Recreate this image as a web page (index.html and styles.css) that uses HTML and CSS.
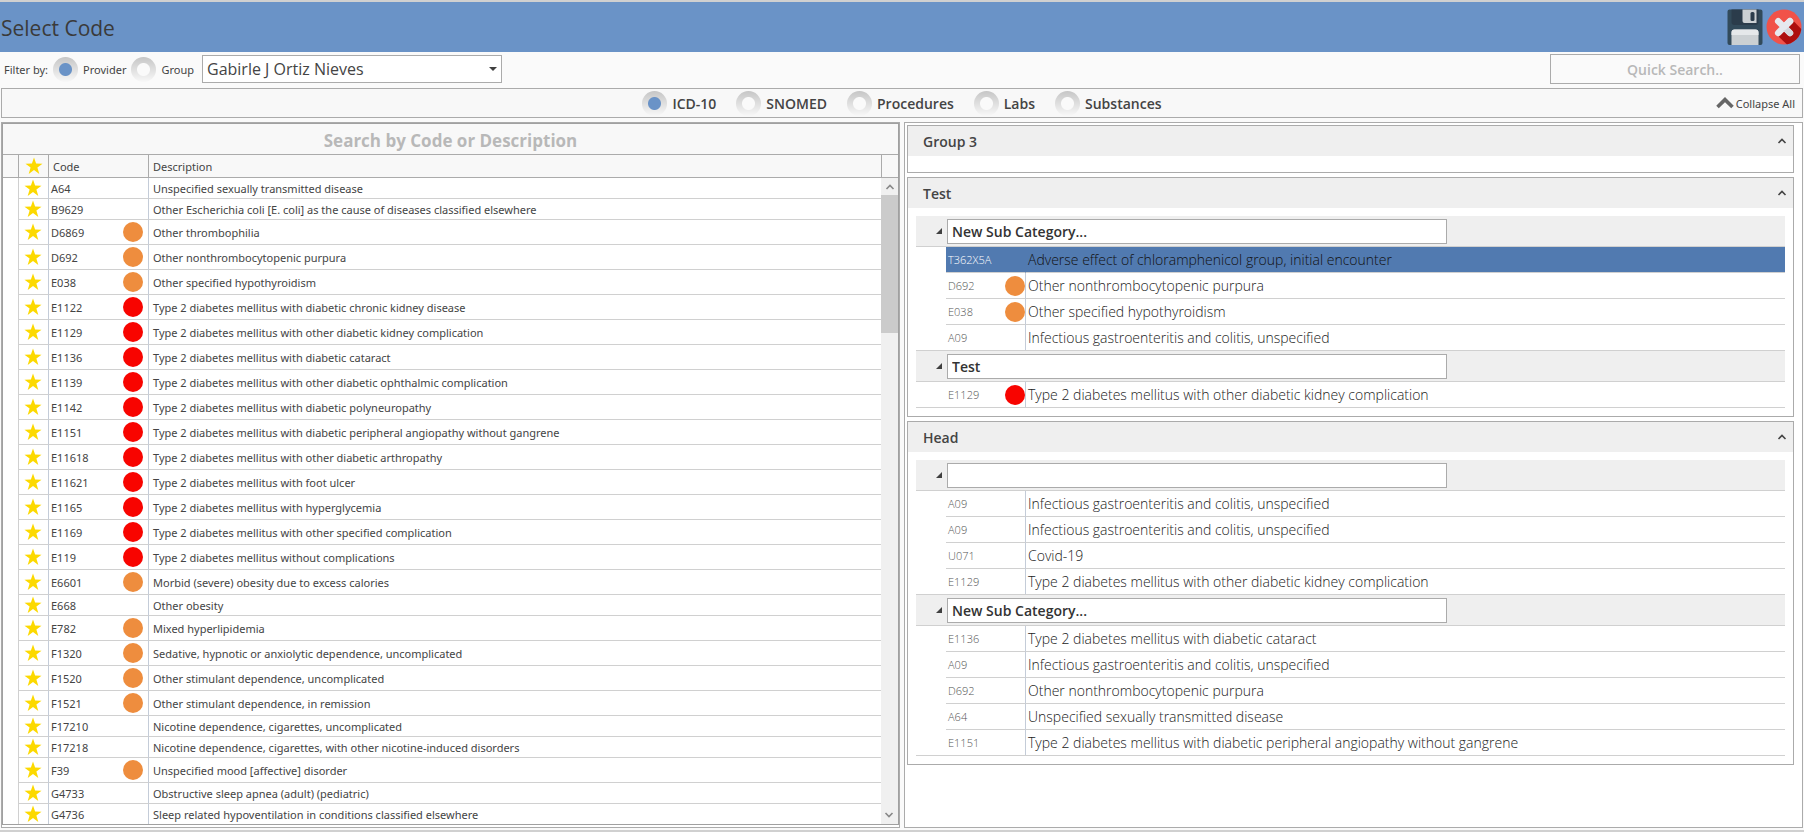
FILE: index.html
```html
<!DOCTYPE html>
<html lang="en">
<head>
<meta charset="utf-8">
<title>Select Code</title>
<link rel="stylesheet" href="styles.css">
</head>
<body>
<svg class="sprite" aria-hidden="true">
  <symbol id="star" viewBox="0 0 18 18"><path d="M9 0.5 11.1 6.6 17.5 6.7 12.4 10.6 14.3 16.9 9 13.1 3.7 16.9 5.6 10.6 0.5 6.7 6.9 6.6Z" fill="#fcd900"/></symbol>
  <symbol id="chev" viewBox="0 0 10 6"><path d="M1.5 5 5 1.5 8.500 5" fill="none" stroke="currentColor" stroke-width="1.6"/></symbol>
  <symbol id="tri" viewBox="0 0 6 6"><path d="M6 0V6H0Z" fill="#404040"/></symbol>
</svg>
<header class="titlebar">
  <h1>Select Code</h1>
  <div class="actions">
    <button type="button" aria-label="Save"><svg viewBox="0 0 35 36"><path d="M2 0.500H33a2 2 0 0 1 2 2V34a2 2 0 0 1-2 2H2a2 2 0 0 1-2-2V2.500a2 2 0 0 1 2-2Z" fill="#324a5a"/><path d="M4 0.500H31V13a3 3 0 0 1-3 3H7a3 3 0 0 1-3-3Z" fill="#2b3c4b"/><path d="M15 0.500H29V14H17a2 2 0 0 1-2-2Z" fill="#cbd0d3"/><rect x="23" y="3" width="4" height="9" rx="1.500" fill="#2b3c4b"/><path d="M7 20.500H28a3 3 0 0 1 3 3V36H4V23.500a3 3 0 0 1 3-3Z" fill="#cbd0d3"/><path d="M7 20.500H28a3 3 0 0 1 3 3V26H4V23.500a3 3 0 0 1 3-3Z" fill="#e5e8ea"/></svg></button>
    <button type="button" aria-label="Close"><svg viewBox="0 0 36 36"><defs><clipPath id="disc"><circle cx="18" cy="18" r="17.500"/></clipPath></defs><circle cx="18" cy="18" r="17.500" fill="#f15249"/><path d="M27 11.500 40 25 32 46 11.500 26.500 10 24.500Z" fill="#ad0e0e" clip-path="url(#disc)"/><path d="M12.200 12.200 24 24M24 12.200 12.200 24" stroke="#e6e9ee" stroke-width="6.500" stroke-linecap="round"/><path d="M20 20 24 24" stroke="#d3d6dc" stroke-width="6" stroke-linecap="round"/><path d="M18 18 24 12.200" stroke="#e6e9ee" stroke-width="6.500" stroke-linecap="round"/></svg></button>
  </div>
</header>
<form class="filters">
  <span class="filter-label">Filter by:</span>
  <label><input type="radio" name="by" checked>Provider</label>
  <label><input type="radio" name="by">Group</label>
  <div class="picker"><select aria-label="Provider name"><option>Gabirle J Ortiz Nieves</option></select><svg viewBox="0 0 8 4"><path d="M0 0H8L4 4Z" fill="#404040"/></svg></div>
  <input class="quick" type="text" placeholder="Quick Search.." aria-label="Quick search">
</form>
<nav class="kinds">
  <div class="kind-list">
    <label><input type="radio" name="kind" checked>ICD-10</label>
    <label><input type="radio" name="kind">SNOMED</label>
    <label><input type="radio" name="kind">Procedures</label>
    <label><input type="radio" name="kind">Labs</label>
    <label><input type="radio" name="kind">Substances</label>
  </div>
  <button class="collapse" type="button"><svg viewBox="0 0 18 12"><path d="M1.500 10 9 2.600 16.500 10" fill="none" stroke="#666" stroke-width="3.600"/></svg>Collapse All</button>
</nav>
<main class="panes">
  <section class="codes">
    <div class="codes-inner">
      <input class="search" type="text" placeholder="Search by Code or Description" aria-label="Search by code or description">
      <div class="scroller">
        <table class="grid">
          <colgroup><col class="c-head"><col class="c-star"><col class="c-code"><col><col class="c-end"></colgroup>
          <thead><tr><th></th><th><svg class="star"><use href="#star"/></svg></th><th>Code</th><th>Description</th><th></th></tr></thead>
          <tbody id="codes"></tbody>
        </table>
        <div class="bar"><button type="button" aria-label="Scroll up"><svg><use href="#chev"/></svg></button><div class="thumb"></div><button class="down" type="button" aria-label="Scroll down"><svg><use href="#chev"/></svg></button></div>
      </div>
    </div>
  </section>
  <section class="groups" id="groups"></section>
</main>
<script src="app.js"></script>
</body>
</html>
```
FILE: styles.css
```css
* { box-sizing: border-box; }
body {
  margin: 0;
  height: 100vh;
  display: flex;
  flex-direction: column;
  border-top: 2px solid #d0d0d0;
  border-bottom: 2px solid #d0d0d0;
  background: #fafafa;
  color: #444;
  font-family: "Open Sans", "Noto Sans", sans-serif;
  font-size: 11px;
}
input, select, button { font: inherit; color: inherit; margin: 0; border-radius: 0; }
button { border: 0; padding: 0; background: none; }
.sprite { display: none; }

.titlebar {
  height: 50px;
  flex: none;
  display: flex;
  align-items: center;
  justify-content: space-between;
  padding: 0 2px 0 1px;
  background: #6a93c7;
}
.titlebar h1 { margin: 0; padding-top: 2px; font-size: 21px; font-weight: 400; color: #3a3a3a; }
.actions { display: flex; gap: 3px; }
.actions button, .actions svg { display: block; width: 36px; height: 36px; }

.filters {
  height: 36px;
  flex: none;
  display: flex;
  align-items: center;
  gap: 5px;
  padding: 0 4px 2px;
  font-family: "Noto Sans", "Open Sans", sans-serif;
}
.filters label, .kinds label { display: flex; align-items: center; gap: 5px; }
input[type="radio"] {
  appearance: none;
  width: 25px;
  height: 25px;
  border-radius: 50%;
  background:
    radial-gradient(circle, #fafafa 6px, transparent 7px),
    linear-gradient(#c6c6c6, #f8f8f8);
}
input[type="radio"]:checked {
  background:
    radial-gradient(circle, #6a93c7 6px, transparent 7px),
    linear-gradient(#c6c6c6, #f8f8f8);
}
.picker { position: relative; width: 300px; margin-left: 3px; }
.picker select {
  appearance: none;
  display: block;
  width: 100%;
  height: 28px;
  padding: 0 4px;
  border: 1px solid #ababab;
  background: #fff;
  font-family: "Open Sans", sans-serif;
  font-size: 16px;
}
.picker svg { position: absolute; right: 5px; top: 12px; width: 8px; height: 4px; }
.quick {
  width: 250px;
  height: 30px;
  margin-left: auto;
  border: 1px solid #ababab;
  background: #fafafa;
  text-align: center;
  font-family: "Open Sans", sans-serif;
  font-size: 14px;
  font-weight: 600;
}
.quick::placeholder, .search::placeholder { color: #b8b8b8; opacity: 1; }

.kinds {
  height: 30px;
  flex: none;
  margin: 0 1px;
  padding: 0 7px;
  display: grid;
  grid-template-columns: 1fr auto 1fr;
  align-items: center;
  border: 1px solid #ababab;
  background: #f8f8f8;
}
.kind-list { grid-column: 2; display: flex; gap: 20px; font-size: 14px; font-weight: 600; }
.collapse { justify-self: end; display: flex; align-items: center; gap: 2px; font-family: "Noto Sans", sans-serif; font-size: 11px; }
.collapse svg { width: 18px; height: 12px; }

.panes {
  flex: 1;
  min-height: 0;
  display: grid;
  grid-template-columns: 899fr 899fr;
  gap: 4px;
  padding: 4px 1px 2px;
}
.codes { min-height: 0; padding-bottom: 2px; border: 1px solid #ababab; background: #fff; }
.codes-inner { height: 100%; display: flex; flex-direction: column; border: 1px solid #a0a0a0; }
.search {
  height: 31px;
  flex: none;
  padding: 2px 0 0;
  border: 0;
  border-bottom: 1px solid #ababab;
  background: #f8f8f8;
  text-align: center;
  font-size: 17px;
  font-weight: 700;
}
.scroller { position: relative; flex: 1; min-height: 0; overflow: hidden; }
.grid { width: 100%; table-layout: fixed; border-spacing: 0; font-family: "Noto Sans", "Open Sans", sans-serif; }
.c-head { width: 16px; }
.c-star { width: 30px; }
.c-code { width: 100px; }
.c-end { width: 16px; }
.grid th {
  height: 23px;
  padding: 0 4px;
  border-right: 1px solid #ababab;
  border-bottom: 1px solid #ababab;
  background: #f8f8f8;
  font-weight: 400;
  text-align: left;
}
.grid th:nth-child(2) { padding-left: 6px; }
.grid th:last-child { border-right: 0; }
.grid td {
  height: 21px;
  padding: 0 4px;
  border-right: 1px solid #c4ccd8;
  border-bottom: 1px solid #d0d0d0;
  white-space: nowrap;
}
.grid .flagged td { height: 25px; }
.grid td:first-child { border-bottom: 0; border-right-color: #d0d0d0; }
.grid td:nth-child(2) { padding-left: 5px; }
.grid td:nth-child(3) { padding: 0 5px 0 2px; }
.grid td:nth-child(4), .grid td:last-child { border-right: 0; }
.star { display: block; width: 18px; height: 18px; }
.code { display: flex; align-items: center; justify-content: space-between; }
.dot { width: 20px; height: 20px; border-radius: 50%; }
.orange { background: #ee8d3e; }
.red { background: #f80400; }
.bar {
  position: absolute;
  top: 23px;
  right: 0;
  bottom: 0;
  width: 17px;
  display: flex;
  flex-direction: column;
  background: #f0f0f0;
  color: #888;
}
.bar button { height: 17px; display: grid; place-items: center; }
.bar svg { width: 10px; height: 6px; }
.thumb { height: 138px; background: #cbcbcb; }
.down { margin-top: auto; transform: rotate(180deg); }

.groups {
  display: flex;
  flex-direction: column;
  gap: 4px;
  padding: 2px 8px 2px 2px;
  border: 1px solid #ababab;
  background: #fff;
  overflow: hidden;
}
.group { border: 1px solid #ababab; }
.group-head {
  width: 100%;
  height: 30px;
  display: flex;
  align-items: center;
  justify-content: space-between;
  padding: 0 6px 0 15px;
  background: #efefef;
  font-size: 14px;
  font-weight: 600;
}
.group-head svg { width: 10px; height: 6px; }
.group-body { padding: 8px; }
.sub-head {
  height: 31px;
  display: flex;
  align-items: center;
  gap: 5px;
  padding-left: 20px;
  border-bottom: 1px solid #d0d0d0;
  background: #efefef;
}
.sub-head button { width: 6px; }
.sub-head svg { display: block; width: 6px; height: 6px; }
.sub-head input {
  width: 500px;
  height: 25px;
  padding: 1px 4px 0;
  border: 1px solid #ababab;
  background: #fff;
  color: #333;
  font-size: 14px;
  font-weight: 600;
}
.items { width: 100%; border-spacing: 0; table-layout: fixed; border-bottom: 1px solid #d0d0d0; }
.i-pad { width: 30px; }
.i-code { width: 80px; }
.items td { height: 26px; padding: 0 2px; border-bottom: 1px solid #d0d0d0; font-size: 14px; font-weight: 300; color: #222; white-space: nowrap; }
.items td:first-child { border-bottom: 0; }
.items tr:last-child td { height: 25px; border-bottom: 0; }
.items td:nth-child(2) { padding: 0 0 0 2px; border-right: 1px solid #c4ccd8; font-size: 11px; color: #555; }
.items .selected td:not(:first-child) { background: #517ab0; border-right-color: #517ab0; color: #111; }
.items .selected td:nth-child(2) { color: #fff; }
```
FILE: app.js
```javascript
const codes = [
  ["A64", "", "Unspecified sexually transmitted disease"],
  ["B9629", "", "Other Escherichia coli [E. coli] as the cause of diseases classified elsewhere"],
  ["D6869", "orange", "Other thrombophilia"],
  ["D692", "orange", "Other nonthrombocytopenic purpura"],
  ["E038", "orange", "Other specified hypothyroidism"],
  ["E1122", "red", "Type 2 diabetes mellitus with diabetic chronic kidney disease"],
  ["E1129", "red", "Type 2 diabetes mellitus with other diabetic kidney complication"],
  ["E1136", "red", "Type 2 diabetes mellitus with diabetic cataract"],
  ["E1139", "red", "Type 2 diabetes mellitus with other diabetic ophthalmic complication"],
  ["E1142", "red", "Type 2 diabetes mellitus with diabetic polyneuropathy"],
  ["E1151", "red", "Type 2 diabetes mellitus with diabetic peripheral angiopathy without gangrene"],
  ["E11618", "red", "Type 2 diabetes mellitus with other diabetic arthropathy"],
  ["E11621", "red", "Type 2 diabetes mellitus with foot ulcer"],
  ["E1165", "red", "Type 2 diabetes mellitus with hyperglycemia"],
  ["E1169", "red", "Type 2 diabetes mellitus with other specified complication"],
  ["E119", "red", "Type 2 diabetes mellitus without complications"],
  ["E6601", "orange", "Morbid (severe) obesity due to excess calories"],
  ["E668", "", "Other obesity"],
  ["E782", "orange", "Mixed hyperlipidemia"],
  ["F1320", "orange", "Sedative, hypnotic or anxiolytic dependence, uncomplicated"],
  ["F1520", "orange", "Other stimulant dependence, uncomplicated"],
  ["F1521", "orange", "Other stimulant dependence, in remission"],
  ["F17210", "", "Nicotine dependence, cigarettes, uncomplicated"],
  ["F17218", "", "Nicotine dependence, cigarettes, with other nicotine-induced disorders"],
  ["F39", "orange", "Unspecified mood [affective] disorder"],
  ["G4733", "", "Obstructive sleep apnea (adult) (pediatric)"],
  ["G4736", "", "Sleep related hypoventilation in conditions classified elsewhere"]
];
const infectious = ["A09", "", "Infectious gastroenteritis and colitis, unspecified"];
const kidney = "Type 2 diabetes mellitus with other diabetic kidney complication";
const groups = [
  { name: "Group 3", subs: [] },
  { name: "Test", subs: [
    { name: "New Sub Category...", items: [
      ["T362X5A", "", "Adverse effect of chloramphenicol group, initial encounter", true],
      ["D692", "orange", "Other nonthrombocytopenic purpura"],
      ["E038", "orange", "Other specified hypothyroidism"],
      infectious] },
    { name: "Test", items: [["E1129", "red", kidney]] }] },
  { name: "Head", subs: [
    { name: "", items: [infectious, infectious, ["U071", "", "Covid-19"], ["E1129", "", kidney]] },
    { name: "New Sub Category...", items: [
      ["E1136", "", "Type 2 diabetes mellitus with diabetic cataract"],
      infectious,
      ["D692", "", "Other nonthrombocytopenic purpura"],
      ["A64", "", "Unspecified sexually transmitted disease"],
      ["E1151", "", "Type 2 diabetes mellitus with diabetic peripheral angiopathy without gangrene"]] }] }
];

const codeCell = (code, color) =>
  `<td><div class="code"><span>${code}</span>${color ? `<span class="dot ${color}"></span>` : ""}</div></td>`;

document.getElementById("codes").innerHTML = codes.map(([code, color, text]) =>
  `<tr class="${color ? "flagged" : ""}"><td></td><td><svg class="star"><use href="#star"/></svg></td>${codeCell(code, color)}<td>${text}</td><td></td></tr>`).join("");

const itemRow = ([code, color, text, selected]) =>
  `<tr class="${selected ? "selected" : ""}"><td></td>${codeCell(code, color)}<td>${text}</td></tr>`;

const subBlock = ({ name, items }) =>
  `<div class="sub-head"><button type="button" aria-label="Toggle"><svg><use href="#tri"/></svg></button><input type="text" aria-label="Sub category" value="${name}"></div>
  <table class="items"><colgroup><col class="i-pad"><col class="i-code"><col></colgroup><tbody>${items.map(itemRow).join("")}</tbody></table>`;

document.getElementById("groups").innerHTML = groups.map(({ name, subs }) =>
  `<section class="group"><button class="group-head" type="button">${name}<svg><use href="#chev"/></svg></button><div class="group-body">${subs.map(subBlock).join("")}</div></section>`).join("");
```
